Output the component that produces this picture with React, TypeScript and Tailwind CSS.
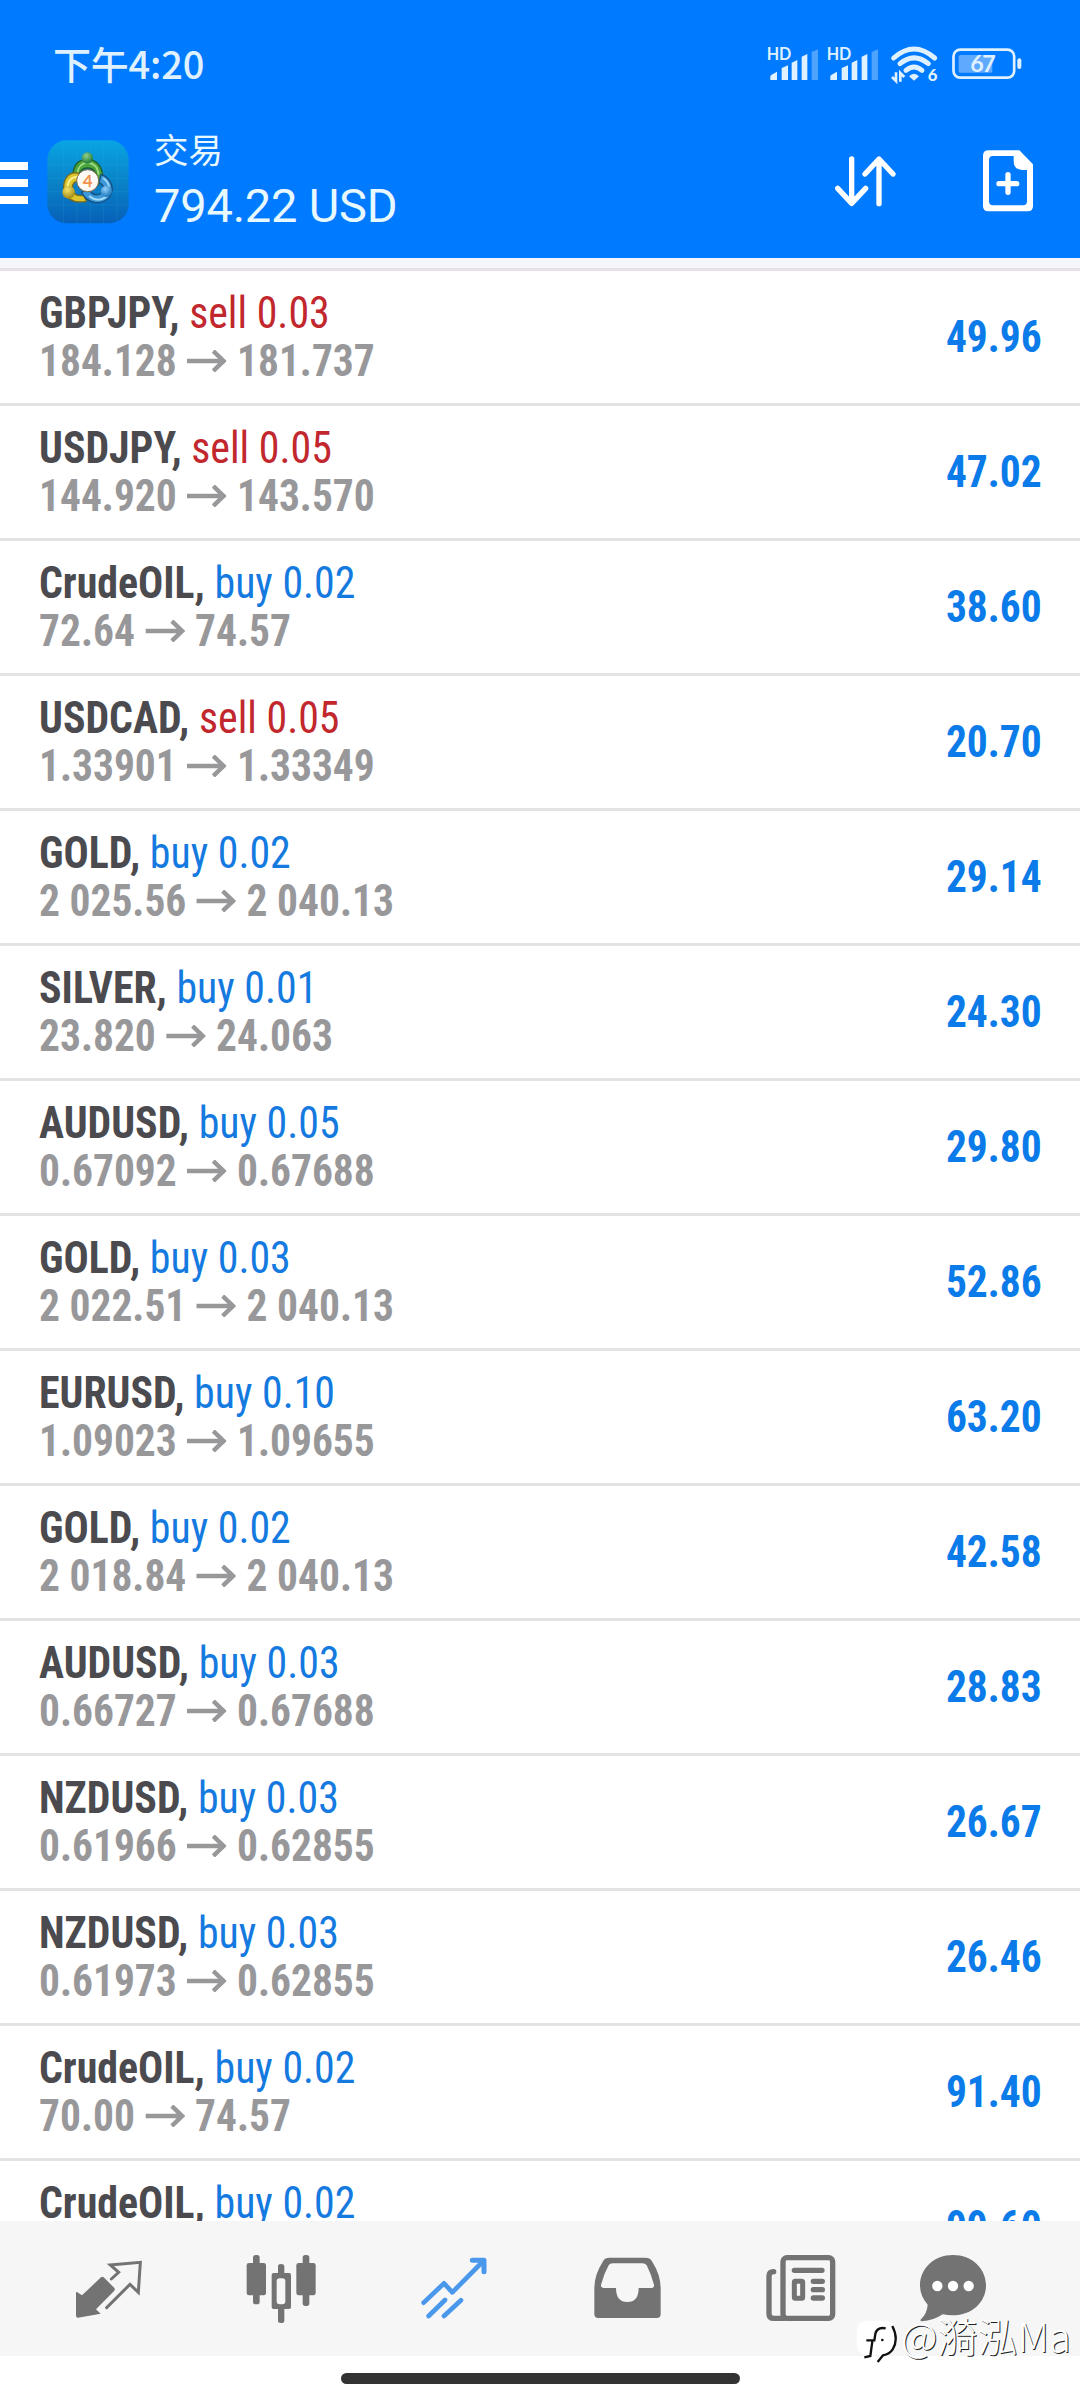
import type { ReactNode } from "react";

type Trade = {
  symbol: string;
  side: "buy" | "sell";
  volume: string;
  open: string;
  current: string;
  profit: string;
};

const trades: Trade[] = [
  { symbol: "GBPJPY", side: "sell", volume: "0.03", open: "184.128", current: "181.737", profit: "49.96" },
  { symbol: "USDJPY", side: "sell", volume: "0.05", open: "144.920", current: "143.570", profit: "47.02" },
  { symbol: "CrudeOIL", side: "buy", volume: "0.02", open: "72.64", current: "74.57", profit: "38.60" },
  { symbol: "USDCAD", side: "sell", volume: "0.05", open: "1.33901", current: "1.33349", profit: "20.70" },
  { symbol: "GOLD", side: "buy", volume: "0.02", open: "2 025.56", current: "2 040.13", profit: "29.14" },
  { symbol: "SILVER", side: "buy", volume: "0.01", open: "23.820", current: "24.063", profit: "24.30" },
  { symbol: "AUDUSD", side: "buy", volume: "0.05", open: "0.67092", current: "0.67688", profit: "29.80" },
  { symbol: "GOLD", side: "buy", volume: "0.03", open: "2 022.51", current: "2 040.13", profit: "52.86" },
  { symbol: "EURUSD", side: "buy", volume: "0.10", open: "1.09023", current: "1.09655", profit: "63.20" },
  { symbol: "GOLD", side: "buy", volume: "0.02", open: "2 018.84", current: "2 040.13", profit: "42.58" },
  { symbol: "AUDUSD", side: "buy", volume: "0.03", open: "0.66727", current: "0.67688", profit: "28.83" },
  { symbol: "NZDUSD", side: "buy", volume: "0.03", open: "0.61966", current: "0.62855", profit: "26.67" },
  { symbol: "NZDUSD", side: "buy", volume: "0.03", open: "0.61973", current: "0.62855", profit: "26.46" },
  { symbol: "CrudeOIL", side: "buy", volume: "0.02", open: "70.00", current: "74.57", profit: "91.40" },
  { symbol: "CrudeOIL", side: "buy", volume: "0.02", open: "69.59", current: "74.57", profit: "99.60" },
];

function Signal() {
  return (
    <svg className="overflow-visible" width="50" height="33" viewBox="84 84 150 99" fill="#dff1ff">
      <text x="80" y="120" fontSize="50" fontWeight="700" fontFamily="Lato, sans-serif" textLength="74" lengthAdjust="spacingAndGlyphs">HD</text>
      <path d="M91 180v-10q0-4 4-6l16-9v25zM125 180v-36l19-8v44zM155 180v-52l17-8v60zM185 180v-70l17-8v78z" />
      <path d="M215 180V96l19-8v92z" opacity="0.35" />
    </svg>
  );
}

function Wifi() {
  return (
    <svg className="overflow-visible" width="47" height="36" viewBox="452 81 141 108" fill="none" stroke="#dff1ff" strokeWidth="15">
      <path d="M460 117Q521 63 583 117" strokeLinecap="round" />
      <path d="M479 134Q521 99 564 134" strokeLinecap="round" />
      <path d="M497 154Q521 134 545 154" strokeLinecap="round" />
      <path d="M506 172Q521 156 536 172L521 185z" fill="#dff1ff" stroke="none" />
      <path d="M467 160v26l-12-12M480 188v-26l12 12" strokeWidth="8" />
      <text x="562" y="187" fontSize="50" fontWeight="900" fontFamily="Lato, sans-serif" fill="#dff1ff" stroke="none">6</text>
    </svg>
  );
}

function Battery() {
  return (
    <svg className="overflow-visible" width="70" height="32" viewBox="635 85 210 96">
      <rect x="639.500" y="90" width="182" height="84" rx="20" fill="none" stroke="#dff1ff" strokeWidth="8" />
      <rect x="655" y="106" width="101" height="53" rx="5" fill="#5fa9ff" />
      <rect x="831" y="116" width="12" height="32" rx="6" fill="#dff1ff" />
      <text x="690" y="158" fontSize="70" fontWeight="700" fontFamily="Lato, sans-serif" fill="#dff1ff" textLength="76">67</text>
    </svg>
  );
}

function AppLogo() {
  return (
    <svg width="82" height="84" viewBox="0 0 246 252">
      <defs>
        <linearGradient id="tile" x1="0" y1="0" x2="0" y2="1">
          <stop offset="0" stopColor="#08a4e4" />
          <stop offset="0.5" stopColor="#0a83c8" />
          <stop offset="1" stopColor="#0660b8" />
        </linearGradient>
        <radialGradient id="greenBall" cx="0.4" cy="0.3" r="0.7">
          <stop offset="0" stopColor="#8fcf8a" />
          <stop offset="1" stopColor="#1f7a35" />
        </radialGradient>
        <radialGradient id="yellowBall" cx="0.4" cy="0.3" r="0.7">
          <stop offset="0" stopColor="#f4e36a" />
          <stop offset="1" stopColor="#a08a14" />
        </radialGradient>
        <radialGradient id="blueBall" cx="0.4" cy="0.3" r="0.7">
          <stop offset="0" stopColor="#8fd0f7" />
          <stop offset="1" stopColor="#1c74bd" />
        </radialGradient>
      </defs>
      <rect x="1" y="1" width="244" height="249" rx="58" fill="url(#tile)" />
      <path d="M50 4v244M90 2v248M130 2v248M170 2v248M210 6v238M2 75h242M2 115h242M2 155h242M2 195h242" stroke="#38b6ea" strokeWidth="1.500" opacity="0.3" />
      {/* three interlocking figures, each a curved body and a round head */}
      <path d="M79 116C74 74 96 58 121 58s49 20 47 64l-18 14c2-30-4-52-29-52-14 0-22 8-24 22z" fill="#4ba53f" stroke="#1d5e2c" strokeWidth="4" />
      <path d="M90 104q4-34 31-36 30 2 34 36" fill="none" stroke="#a4dc84" strokeWidth="5" />
      <path d="M96 100C66 92 50 116 50 142c0 30 26 50 68 42l-8-18c-22 4-34-6-34-22 0-14 8-22 24-22z" fill="#dcc52c" stroke="#7a6c1c" strokeWidth="4" />
      <path d="M92 110q-30 2-30 32" fill="none" stroke="#f8ef8a" strokeWidth="6" />
      <path d="M162 104c24 6 38 32 32 54-8 26-38 36-62 26-14-6-24-16-28-28l22-8c8 14 20 20 34 14 14-8 14-26-4-34z" fill="#3c98d8" stroke="#165080" strokeWidth="4" />
      <path d="M126 168q28 22 54 0M168 114q20 14 18 34" fill="none" stroke="#a3dbf8" strokeWidth="5" />
      <circle cx="121" cy="54" r="17" fill="url(#greenBall)" />
      <circle cx="65" cy="157" r="19" fill="url(#yellowBall)" />
      <circle cx="178" cy="154" r="17" fill="url(#blueBall)" />
      <circle cx="122" cy="122" r="33" fill="#fdfaf6" stroke="#7b6a4a" strokeWidth="3" />
      <text x="122" y="140" fontSize="51" fontWeight="700" fontFamily="Lato, sans-serif" fill="#f0934e" textAnchor="middle">4</text>
    </svg>
  );
}

function Header() {
  return (
    <header className="h-[258px] shrink-0 bg-[#007aff] text-[#e8f8ff]">
      <div className="flex h-32 items-center pr-[58px] pl-[53px]">
        <span className="flex-1 pb-[3px] font-['Noto_Sans_CJK_SC',sans-serif] text-[38px] leading-none font-medium tracking-[-0.2px] text-[#dff1ff]">
          下午4:20
        </span>
        <div className="flex items-center">
          <Signal />
          <div className="ml-2.5"><Signal /></div>
          <div className="ml-[13px]"><Wifi /></div>
          <div className="ml-3.5"><Battery /></div>
        </div>
      </div>
      <div className="flex items-start">
        <div className="mt-[34px] flex w-7 flex-col gap-[9px]">
          <div className="h-2 bg-white" />
          <div className="h-2 bg-white" />
          <div className="h-2 bg-white" />
        </div>
        <div className="mt-3 ml-[19px]"><AppLogo /></div>
        <div className="-mt-px ml-[25px] flex-1">
          <div className="font-['Noto_Sans_CJK_SC',sans-serif] text-[34.500px] leading-[42px]">交易</div>
          <div className="mt-2.5 font-['Roboto',sans-serif] text-[47px] leading-[54px] tracking-[-0.2px]">794.22 USD</div>
        </div>
        <svg className="mt-7 mr-[87px]" width="61" height="51" viewBox="284 407 183 153" fill="none" stroke="#fff" strokeWidth="16" strokeLinecap="round" strokeLinejoin="round">
          <path d="M334 416v132M292 504l42 45 42-45" />
          <path d="M416 550V418M374 461l42-45 42 45" />
        </svg>
        <svg className="mt-[22px] mr-[46px]" width="51" height="62" viewBox="729 390 153 186" fill="none" stroke="#fff">
          <path d="M746 391h92l41 42v126q0 15-16 15H745q-16 0-16-15V407q0-16 17-16zM759 408q-12 0-12 12v124q0 12 12 12h90q12 0 12-12v-94h-14q-26 0-26-28v-14z" fill="#fff" fillRule="evenodd" stroke="none" />
          <path d="M804 464v53M777 491h53" strokeWidth="16" strokeLinecap="round" />
        </svg>
      </div>
    </header>
  );
}

function TradeRow({ trade }: { trade: Trade }) {
  return (
    <li className="flex h-[135px] shrink-0 items-center justify-between border-b-[3px] border-[#e3e3e5] px-[38.500px] text-[44px] leading-[48px] font-bold">
      <div>
        <div className="origin-left scale-x-[0.951] text-[#4a4a4f]">
          {trade.symbol},{" "}
          <span className={trade.side === "buy" ? "font-normal text-[#147adf]" : "font-normal text-[#c1272d]"}>
            {trade.side} {trade.volume}
          </span>
        </div>
        <div className="flex origin-left scale-x-[0.942] items-center text-[#98989b]">
          {trade.open}
          <svg className="mx-[11px] mb-px" width="42" height="22" viewBox="0 0 42 22" fill="none" stroke="currentColor" strokeWidth="4.500">
            <path d="M0 11h39M28 1l11 10-11 10" />
          </svg>
          {trade.current}
        </div>
      </div>
      <div className="origin-right scale-x-[0.942] text-[#0a7be8]">{trade.profit}</div>
    </li>
  );
}

function NavIcon({ viewBox, className, children }: { viewBox: string; className?: string; children: ReactNode }) {
  return (
    <button className={className}>
      <svg width="72" height="72" viewBox={viewBox} fill="none" stroke="currentColor" strokeLinecap="round" strokeLinejoin="round">
        {children}
      </svg>
    </button>
  );
}

function BottomNav() {
  return (
    <nav className="flex h-[135px] shrink-0 items-center gap-[101px] bg-[#f6f6f6] pl-[73px] text-[#737373]">
      {/* quotes */}
      <NavIcon viewBox="219 396 216 216">
        <path d="M303 469q4-3 8 0l32 32q3 4 0 8l-55 56 14 13-68 12q-6 0-6-6v-68q0-5 4-2l14 9z" fill="currentColor" stroke="none" />
        <path d="M334 474l22-20-25-22 90-8-6 90-25-24-70 70" strokeWidth="9" strokeLinejoin="miter" />
      </NavIcon>
      {/* charts */}
      <NavIcon viewBox="738 396 216 216">
        <g fill="currentColor" stroke="none">
          <rect x="740" y="426" width="58" height="97" rx="7" />
          <rect x="759" y="402" width="20" height="148" rx="8" />
          <rect x="889" y="426" width="58" height="97" rx="7" />
          <rect x="908" y="402" width="20" height="153" rx="8" />
          <path d="M834 436q0-7 9-7t10 7v20h14q6 0 6 6v96q0 6-6 6h-14v35q0 7-10 7t-9-7v-35h-13q-6 0-6-6v-96q0-6 6-6h13zM839 472q-9 0-9 9v60q0 9 9 9h8q9 0 9-9v-60q0-9-9-9z" fillRule="evenodd" />
        </g>
      </NavIcon>
      {/* trade, the active tab */}
      <NavIcon viewBox="177 396 216 216" className="text-[#4a98ec]">
        <path d="M191 545l61-58 25 27 90-91M206 585l49-48M252 585l51-47" strokeWidth="14" />
        <path d="M337 418h35v34" strokeWidth="15" />
      </NavIcon>
      {/* history */}
      <NavIcon viewBox="696 396 216 216">
        <path d="M748 410h108q14 0 19 9 27 42 27 82v78q0 12-12 12H715q-12 0-12-12v-78q0-40 27-82 5-9 18-9zM759 427q-10 0-13 6-14 25-23 58-1 10 9 10h36q0 42 34 42t34-42h36q12 0 10-10-9-33-22-58-4-6-13-6z" fill="currentColor" fillRule="evenodd" stroke="none" />
      </NavIcon>
      {/* news */}
      <NavIcon viewBox="135 396 216 216">
        <rect x="189" y="410" width="149" height="182" rx="12" strokeWidth="16" />
        <path d="M161 452q-14 0-14 14v112q0 14 14 14h32" strokeWidth="16" />
        <path d="M223 448h83M280 481h27M280 506h27M280 531h27" strokeWidth="16" />
        <rect x="223" y="481" width="25" height="51" rx="3" strokeWidth="15" />
      </NavIcon>
      {/* chat */}
      <NavIcon viewBox="591 396 216 216" className="-ml-[21px]">
        <path d="M699 402c56 0 99 40 99 91s-43 90-99 90q-17 0-31-3-28 19-62 21-8-1-3-6 18-17 20-44-23-26-23-58c0-51 43-91 99-91z" fill="currentColor" stroke="none" />
        <path d="M652 495h0M699 495h0M746 495h0" stroke="#fff" strokeWidth="31" />
      </NavIcon>
    </nav>
  );
}

function Watermark() {
  return (
    <div className="absolute top-[2310px] left-[855px] flex items-center whitespace-nowrap text-white">
      <svg width="42" height="54" viewBox="0 0 126 162" fill="none" strokeWidth="7">
        <rect x="5" y="32" width="117" height="103" rx="30" fill="#fff" />
        <path d="M92 55Q66 50 61 72L58 91H34M52 94L46 138L28 142" stroke="#111" />
        <path d="M112 48Q132 88 113 118Q104 132 84 136L68 156" stroke="#111" />
        <circle cx="82" cy="90" r="4" fill="#111" />
      </svg>
      <span className="-mt-1 ml-1 font-['Noto_Sans_CJK_SC',sans-serif] text-[40px] leading-[48px] font-light [text-shadow:1px_1px_0px_#222]">
        @漪泓Ma
      </span>
    </div>
  );
}

export default function App() {
  return (
    <div className="relative flex h-[2400px] w-[1080px] flex-col overflow-hidden bg-white">
      <Header />
      <div className="h-[13px] shrink-0 border-b-[3px] border-[#e9dfea] bg-[#f5f6fa]" />
      <ul className="flex min-h-0 flex-1 flex-col overflow-hidden font-['Roboto_Condensed','Roboto',sans-serif] [font-stretch:75%]">
        {trades.map((trade, i) => (
          <TradeRow key={i} trade={trade} />
        ))}
      </ul>
      <BottomNav />
      <div className="flex h-11 shrink-0 justify-center pt-[17px]">
        <div className="h-[11px] w-[399px] rounded-full bg-[#333]" />
      </div>
      <Watermark />
    </div>
  );
}
